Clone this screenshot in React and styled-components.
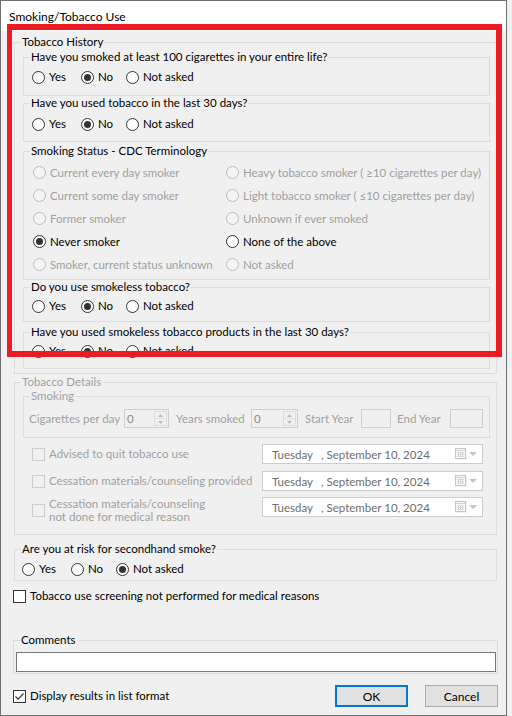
import React from 'react';
import styled, { createGlobalStyle } from 'styled-components';

const FS = '11.5px';
const GRAY = '#a0a0a0';

const Global = createGlobalStyle`
  html, body { margin: 0; padding: 0; background: #f0f0f0; }
  body {
    font-family: Lato, "Liberation Sans", sans-serif;
    font-size: ${FS};
    color: #000;
  }
  #root { width: 512px; height: 716px; }
`;

const Window = styled.div`
  position: relative;
  width: 507px;
  height: 716px;
  box-sizing: border-box;
  border: 1px solid #6f6f6f;
  background: #f0f0f0;
  display: flex;
  flex-direction: column;
  overflow: hidden;
`;

const TitleBar = styled.div`
  height: 30px;
  flex: none;
  background: #fff;
  display: flex;
  align-items: center;
  padding-left: 8px;
  font-size: 12px;
`;

const Body = styled.div`
  padding: 4px 8px 0 12px;
  display: flex;
  flex-direction: column;
`;

const Group = styled.fieldset`
  margin: ${(p) => p.$mt || 0}px ${(p) => p.$mr || 0}px 0 ${(p) => p.$ml || 0}px;
  padding: 0;
  border: 1px solid #dcdcdc;
  min-width: 0;
`;

const Legend = styled.legend`
  margin-left: 6px;
  padding: 0 1px;
  font-size: ${FS};
  line-height: 14px;
  color: ${(p) => (p.$disabled ? GRAY : '#000')};
`;

const GroupBody = styled.div`
  padding: ${(p) => p.$pad};
  display: flex;
  flex-direction: column;
`;

const RadioRow = styled.div`
  display: flex;
  align-items: center;
  height: 16px;
`;

const Option = styled.label`
  display: flex;
  align-items: center;
  gap: 4px;
  flex: none;
  width: ${(p) => (p.$w ? `${p.$w}px` : 'auto')};
  line-height: 16px;
  white-space: nowrap;
  color: ${(p) => (p.$disabled ? GRAY : '#000')};
`;

const RadioDot = styled.span`
  width: 13px;
  height: 13px;
  box-sizing: border-box;
  border-radius: 50%;
  border: 1px solid ${(p) => (p.$disabled ? '#bcbcbc' : '#333')};
  background: ${(p) => (p.$disabled ? '#f4f4f4' : '#fff')};
  display: flex;
  align-items: center;
  justify-content: center;
  flex: none;
  &::after {
    content: '';
    width: 7px;
    height: 7px;
    border-radius: 50%;
    background: #333;
    display: ${(p) => (p.$checked ? 'block' : 'none')};
  }
`;

const Box = styled.span`
  width: 13px;
  height: 13px;
  box-sizing: border-box;
  border: 1px solid ${(p) => (p.$disabled ? '#cccccc' : '#333')};
  background: ${(p) => (p.$disabled ? '#f0f0f0' : '#fff')};
  display: flex;
  align-items: center;
  justify-content: center;
  flex: none;
`;

const StatusGrid = styled.div`
  display: grid;
  grid-template-columns: 193px auto;
  grid-auto-rows: 23px;
  align-items: center;
`;

const SpinRow = styled.div`
  display: flex;
  align-items: center;
  height: 19px;
`;

const FieldLabel = styled.span`
  flex: none;
  box-sizing: border-box;
  width: ${(p) => p.$w}px;
  padding-left: ${(p) => p.$pl || 0}px;
  color: ${GRAY};
  white-space: nowrap;
`;

const Spin = styled.div`
  flex: none;
  width: ${(p) => p.$w}px;
  height: 19px;
  box-sizing: border-box;
  border: 1px solid #cfcfcf;
  background: #f0f0f0;
  display: flex;
  align-items: stretch;
  justify-content: space-between;
  padding: 1px 1px 1px 2px;
  color: #8a8a8a;
  line-height: 15px;
`;

const SpinButtons = styled.div`
  width: 13px;
  display: flex;
  flex-direction: column;
  border: 1px solid #dddddd;
  box-sizing: border-box;
`;

const SpinHalf = styled.div`
  flex: 1;
  display: flex;
  align-items: center;
  justify-content: center;
  & + & { border-top: 1px solid #e4e4e4; }
`;

const YearBox = styled.div`
  flex: none;
  width: ${(p) => p.$w}px;
  height: 19px;
  box-sizing: border-box;
  border: 1px solid #cfcfcf;
  background: #f0f0f0;
`;

const CheckList = styled.div`
  display: flex;
  flex-direction: column;
  padding-left: 9px;
`;

const CheckRow = styled.div`
  display: flex;
  align-items: flex-start;
  margin-top: ${(p) => p.$mt}px;
`;

const CheckLabel = styled.label`
  flex: none;
  width: 230px;
  min-height: 20px;
  display: flex;
  align-items: center;
  gap: 4px;
  color: ${(p) => (p.$disabled ? GRAY : '#000')};
  line-height: ${(p) => (p.$multi ? '13px' : '16px')};
  white-space: nowrap;
`;

const DatePicker = styled.div`
  flex: none;
  width: 221px;
  height: 20px;
  box-sizing: border-box;
  border: 1px solid #cccccc;
  background: #fff;
  display: flex;
  align-items: center;
  padding: 0 5px 0 9px;
  color: #6d6d6d;
  white-space: nowrap;
`;

const DayName = styled.span`
  width: 49px;
  flex: none;
`;

const PickerIcons = styled.span`
  margin-left: auto;
  display: flex;
  align-items: center;
  gap: 2px;
`;

const SingleCheck = styled.label`
  display: flex;
  align-items: center;
  gap: 4px;
  height: 16px;
  margin-top: ${(p) => p.$mt || 0}px;
  line-height: 16px;
  white-space: nowrap;
`;

const TextInput = styled.div`
  height: 20px;
  box-sizing: border-box;
  margin: 0 1px 0 2px;
  border: 1px solid #7a7a7a;
  background: #fff;
`;

const Footer = styled.div`
  display: flex;
  align-items: center;
  margin-top: 11px;
  height: 22px;
`;

const Buttons = styled.div`
  margin-left: auto;
  display: flex;
  gap: 17px;
`;

const Button = styled.button`
  width: 73px;
  height: 22px;
  box-sizing: border-box;
  padding: 0;
  font: inherit;
  font-size: 12px;
  color: #000;
  background: #e1e1e1;
  border: ${(p) => (p.$default ? '2px solid #0078d7' : '1px solid #adadad')};
`;

const Highlight = styled.div`
  position: absolute;
  left: 6px;
  top: 23px;
  width: 495px;
  height: 333px;
  box-sizing: border-box;
  border: 6px solid #ed1c24;
  border-left-width: 5px;
  pointer-events: none;
`;

function Radio({ label, checked, disabled, w }) {
  return (
    <Option $w={w} $disabled={disabled}>
      <RadioDot $checked={checked} $disabled={disabled} />
      {label}
    </Option>
  );
}

function Check({ checked, disabled }) {
  return (
    <Box $disabled={disabled}>
      {checked && (
        <svg width="11" height="11" viewBox="0 0 11 11">
          <path d="M1.5 5.5 L4.2 8.2 L9.5 2.5" fill="none" stroke="#333" strokeWidth="1.2" />
        </svg>
      )}
    </Box>
  );
}

function YesNoNot({ value }) {
  return (
    <RadioRow>
      <Radio w={49} label="Yes" checked={value === 'yes'} />
      <Radio w={45} label="No" checked={value === 'no'} />
      <Radio label="Not asked" checked={value === 'na'} />
    </RadioRow>
  );
}

function Question({ title, value, mt, pt, pb }) {
  return (
    <Group $mt={mt}>
      <Legend>{title}</Legend>
      <GroupBody $pad={`${pt}px 0 ${pb}px 8px`}>
        <YesNoNot value={value} />
      </GroupBody>
    </Group>
  );
}

const statusOptions = [
  ['Current every day smoker', true, false],
  ['Heavy tobacco smoker ( \u226510 cigarettes per day)', true, false],
  ['Current some day smoker', true, false],
  ['Light tobacco smoker ( \u226410 cigarettes per day)', true, false],
  ['Former smoker', true, false],
  ['Unknown if ever smoked', true, false],
  ['Never smoker', false, true],
  ['None of the above', false, false],
  ['Smoker, current status unknown', true, false],
  ['Not asked', true, false],
];

function SpinArrows() {
  return (
    <SpinButtons>
      <SpinHalf>
        <svg width="5" height="3" viewBox="0 0 5 3"><path d="M0 3h5L2.5 0z" fill="#bdbdbd" /></svg>
      </SpinHalf>
      <SpinHalf>
        <svg width="5" height="3" viewBox="0 0 5 3"><path d="M0 0h5L2.5 3z" fill="#bdbdbd" /></svg>
      </SpinHalf>
    </SpinButtons>
  );
}

function CalendarIcon() {
  return (
    <svg width="12" height="12" viewBox="0 0 12 12">
      <rect x="1.5" y="1.5" width="10" height="10" fill="#e8e8e8" />
      <rect x="0.5" y="0.5" width="10" height="10" fill="#fafafa" stroke="#c4c4c4" />
      <path d="M1 2.5h9" stroke="#d0d0d0" />
      <path d="M2 4.5h7M2 6.5h7M2 8.5h7M3.5 4v5M5.5 4v5M7.5 4v5" stroke="#d6d6d6" strokeWidth="1" />
    </svg>
  );
}

function Picker() {
  return (
    <DatePicker>
      <DayName>Tuesday</DayName>
      <span>, September 10, 2024</span>
      <PickerIcons>
        <CalendarIcon />
        <svg width="8" height="4" viewBox="0 0 8 4"><path d="M0 0h8L4 4z" fill="#c4c4c4" /></svg>
      </PickerIcons>
    </DatePicker>
  );
}

export default function App() {
  return (
    <>
      <Global />
      <Window>
        <TitleBar>Smoking/Tobacco Use</TitleBar>
        <Body>
          <Group $ml={1} $mr={1}>
            <Legend>Tobacco History</Legend>
            <GroupBody $pad="0 6px 4px 8px">
              <Question mt={1} pt={5} pb={10} value="no" title="Have you smoked at least 100 cigarettes in your entire life?" />
              <Question mt={0} pt={6} pb={9} value="no" title="Have you used tobacco in the last 30 days?" />
              <Group $mt={2}>
                <Legend>Smoking Status - CDC Terminology</Legend>
                <GroupBody $pad="3px 0 3px 9px">
                  <StatusGrid>
                    {statusOptions.map(([label, disabled, checked]) => (
                      <Radio key={label} label={label} disabled={disabled} checked={checked} />
                    ))}
                  </StatusGrid>
                </GroupBody>
              </Group>
              <Question mt={0} pt={4} pb={7} value="no" title="Do you use smokeless tobacco?" />
              <Question mt={3} pt={4} pb={9} value="no" title="Have you used smokeless tobacco products in the last 30 days?" />
            </GroupBody>
          </Group>

          <Group $ml={1} $mr={1} $mt={1}>
            <Legend $disabled>Tobacco Details</Legend>
            <GroupBody $pad="0 6px 11px 8px">
              <Group>
                <Legend $disabled>Smoking</Legend>
                <GroupBody $pad="6px 0 9px 5px">
                  <SpinRow>
                    <FieldLabel $w={95}>Cigarettes per day</FieldLabel>
                    <Spin $w={45}>0<SpinArrows /></Spin>
                    <FieldLabel $w={82} $pl={7}>Years smoked</FieldLabel>
                    <Spin $w={47}>0<SpinArrows /></Spin>
                    <FieldLabel $w={63} $pl={7}>Start Year</FieldLabel>
                    <YearBox $w={30} />
                    <FieldLabel $w={59} $pl={6}>End Year</FieldLabel>
                    <YearBox $w={33} />
                  </SpinRow>
                </GroupBody>
              </Group>
              <CheckList>
                <CheckRow $mt={6}>
                  <CheckLabel $disabled><Check disabled />Advised to quit tobacco use</CheckLabel>
                  <Picker />
                </CheckRow>
                <CheckRow $mt={7}>
                  <CheckLabel $disabled><Check disabled />Cessation materials/counseling provided</CheckLabel>
                  <Picker />
                </CheckRow>
                <CheckRow $mt={6}>
                  <CheckLabel $disabled $multi>
                    <Check disabled />
                    <span>Cessation materials/counseling<br />not done for medical reason</span>
                  </CheckLabel>
                  <Picker />
                </CheckRow>
              </CheckList>
            </GroupBody>
          </Group>

          <Group $ml={1} $mr={1} $mt={7}>
            <Legend>Are you at risk for secondhand smoke?</Legend>
            <GroupBody $pad="5px 0 3px 7px">
              <RadioRow>
                <Radio w={49} label="Yes" />
                <Radio w={45} label="No" />
                <Radio label="Not asked" checked />
              </RadioRow>
            </GroupBody>
          </Group>

          <SingleCheck $mt={7}>
            <Check />
            Tobacco use screening not performed for medical reasons
          </SingleCheck>

          <Group $mt={29}>
            <Legend>Comments</Legend>
            <GroupBody $pad="5px 0 1px 0">
              <TextInput />
            </GroupBody>
          </Group>

          <Footer>
            <SingleCheck>
              <Check checked />
              Display results in list format
            </SingleCheck>
            <Buttons>
              <Button $default>OK</Button>
              <Button>Cancel</Button>
            </Buttons>
          </Footer>
        </Body>
        <Highlight />
      </Window>
    </>
  );
}
